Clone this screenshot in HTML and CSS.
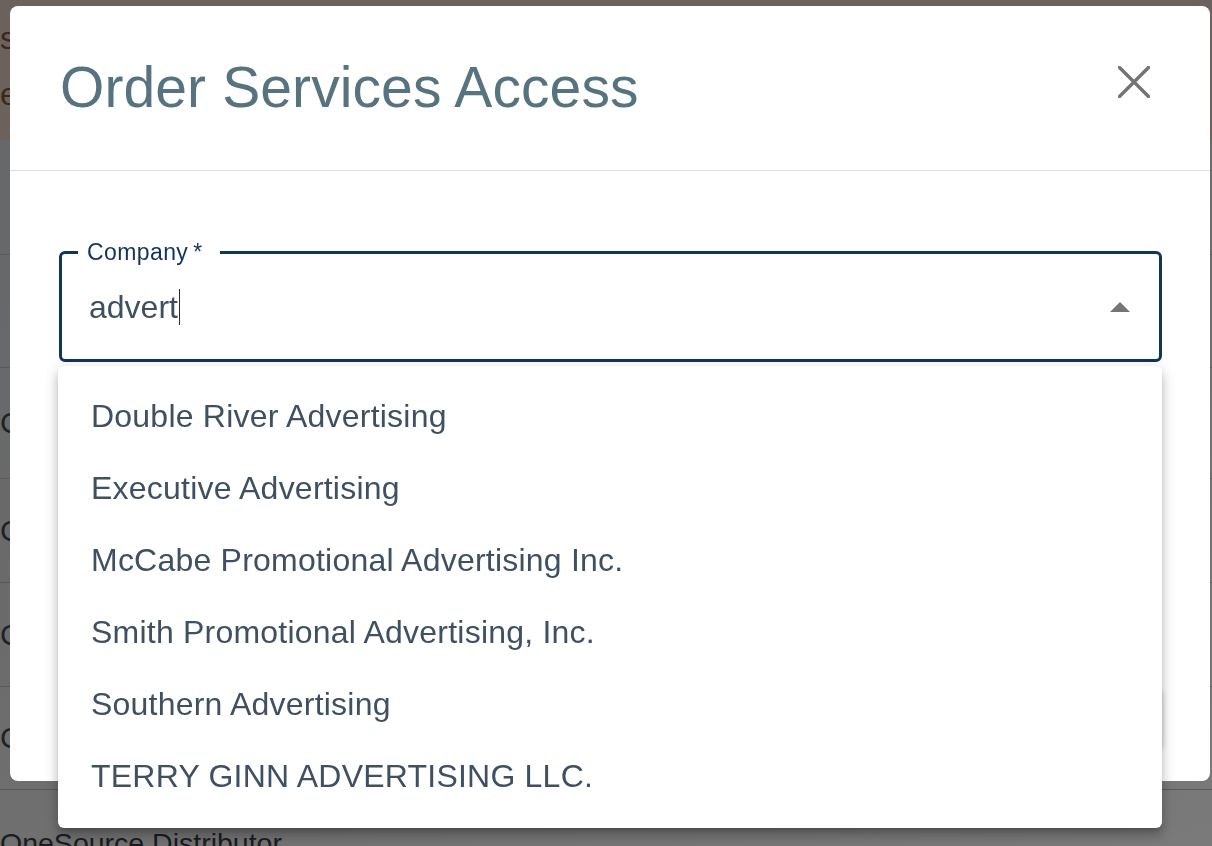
FILE: index.html
```html
<!DOCTYPE html>
<html lang="en">
<head>
<meta charset="utf-8">
<title>Order Services Access</title>
<link rel="stylesheet" href="styles.css">
</head>
<body>
<div class="page">
  <div class="page-head">
    <div class="ph-line ph-1">s</div>
    <div class="ph-line ph-2">e</div>
  </div>
  <div class="page-rows">
    <div class="prow h115"></div>
    <div class="prow h113"></div>
    <div class="prow h111"><span>C</span></div>
    <div class="prow h104"><span>C</span></div>
    <div class="prow h104"><span>C</span></div>
    <div class="prow h103"><span>C</span></div>
    <div class="prow h106 last-row"><span>OneSource Distributor</span></div>
  </div>
</div>

<div class="modal" role="dialog" aria-labelledby="modal-title">
  <header class="modal-head">
    <h1 id="modal-title" class="modal-title">Order Services Access</h1>
    <button class="close-btn" aria-label="Close">
      <svg width="32" height="32" viewBox="0 0 32 32"><path d="M1.5 1.5 L30.5 30.5 M30.5 1.5 L1.5 30.5" stroke="#747474" stroke-width="3.4" stroke-linecap="round" fill="none"/></svg>
    </button>
  </header>
  <div class="modal-body">
    <div class="field">
      <label class="field-label">Company&thinsp;*</label>
      <div class="field-value">advert<span class="caret"></span></div>
      <span class="arrow"></span>
    </div>
    <button class="submit-btn">Submit</button>
  </div>
</div>

<ul class="listbox" role="listbox">
  <li>Double River Advertising</li>
  <li>Executive Advertising</li>
  <li>McCabe Promotional Advertising Inc.</li>
  <li>Smith Promotional Advertising, Inc.</li>
  <li>Southern Advertising</li>
  <li>TERRY GINN ADVERTISING LLC.</li>
</ul>
</body>
</html>
```
FILE: styles.css
```css
* { box-sizing: border-box; }
html, body { margin: 0; padding: 0; }
body {
  width: 1212px;
  height: 846px;
  overflow: hidden;
  font-family: "Liberation Sans", Arial, sans-serif;
  background: #6c6c6c;
}

/* page behind the dimmed overlay */
.page { width: 1212px; height: 846px; overflow: hidden; }
.page-head {
  height: 140px;
  background: #6b625d;
  color: #38281c;
  font-size: 32px;
  padding-top: 18px;
}
.ph-line { line-height: 40px; }
.ph-2 { margin-top: 16px; }
.page-rows {
  height: 706px;
  overflow: hidden;
  background: linear-gradient(160deg, #66686a 0%, #6a6a6a 40%, #7a7a7a 100%);
}
.prow {
  display: flex;
  align-items: center;
  border-bottom: 1px solid #595959;
  color: #1d2228;
  font-size: 30px;
}
.prow:last-child { border-bottom: 0; }
.last-row { font-size: 28.5px; color: #1a1c1f; }
.h115 { height: 115px; }
.h113 { height: 113px; }
.h111 { height: 111px; }
.h104 { height: 104px; }
.h103 { height: 103px; }
.h106 { height: 106px; }

/* modal */
.modal {
  position: fixed;
  left: 10px;
  top: 6px;
  width: 1200px;
  height: 775px;
  background: #fff;
  border-radius: 8px;
  display: flex;
  flex-direction: column;
}
.modal-head {
  display: flex;
  justify-content: space-between;
  align-items: flex-start;
  padding: 47px 60px 49px 50px;
  border-bottom: 1px solid #dddddd;
}
.modal-title {
  margin: 0;
  font-weight: 400;
  font-size: 57px;
  line-height: 68px;
  letter-spacing: 0.1px;
  color: #587380;
}
.close-btn {
  margin-top: 13px;
  padding: 0;
  border: 0;
  background: none;
  width: 32px;
  height: 32px;
  display: block;
}
.close-btn svg { display: block; }

.modal-body {
  flex: 1;
  display: flex;
  flex-direction: column;
  padding: 80px 48px 33px 49px;
}
.field {
  position: relative;
  height: 111px;
  border: 3px solid #12355b;
  border-radius: 6px;
  display: flex;
  align-items: center;
  padding-left: 27px;
}
.field-label {
  position: absolute;
  left: 16px;
  top: -13px;
  padding: 0 17px 0 9px;
  background: #fff;
  font-size: 23px;
  line-height: 23px;
  letter-spacing: 0.4px;
  color: #12355b;
}
.field-value {
  flex: 1;
  font-size: 32px;
  line-height: 40px;
  color: #3e4f60;
  display: flex;
  align-items: center;
}
.caret {
  display: inline-block;
  width: 0;
  height: 36px;
  border-left: 1.5px solid #2a2a2a;
  margin-left: 1px;
}
.arrow {
  width: 0;
  height: 0;
  border-left: 10px solid transparent;
  border-right: 10px solid transparent;
  border-bottom: 10px solid #757575;
  margin-right: 29px;
}
.submit-btn {
  align-self: flex-end;
  margin-top: auto;
  width: 220px;
  height: 62px;
  border: 0;
  border-radius: 6px;
  background: #fff;
  font-family: inherit;
  font-size: 26px;
  color: #12355b;
  box-shadow: 0 3px 6px rgba(0,0,0,0.25);
}

/* dropdown popup */
.listbox {
  position: fixed;
  left: 58px;
  top: 366px;
  width: 1104px;
  height: 462px;
  margin: 0;
  padding: 14px 0 16px;
  list-style: none;
  background: #fff;
  border-radius: 6px;
  box-shadow: 0 5px 5px -3px rgba(0,0,0,0.2), 0 8px 10px 1px rgba(0,0,0,0.14), 0 3px 14px 2px rgba(0,0,0,0.12);
}
.listbox li {
  height: 72px;
  display: flex;
  align-items: center;
  padding-left: 33px;
  font-size: 32px;
  letter-spacing: 0.22px;
  color: #3e5062;
}
```
